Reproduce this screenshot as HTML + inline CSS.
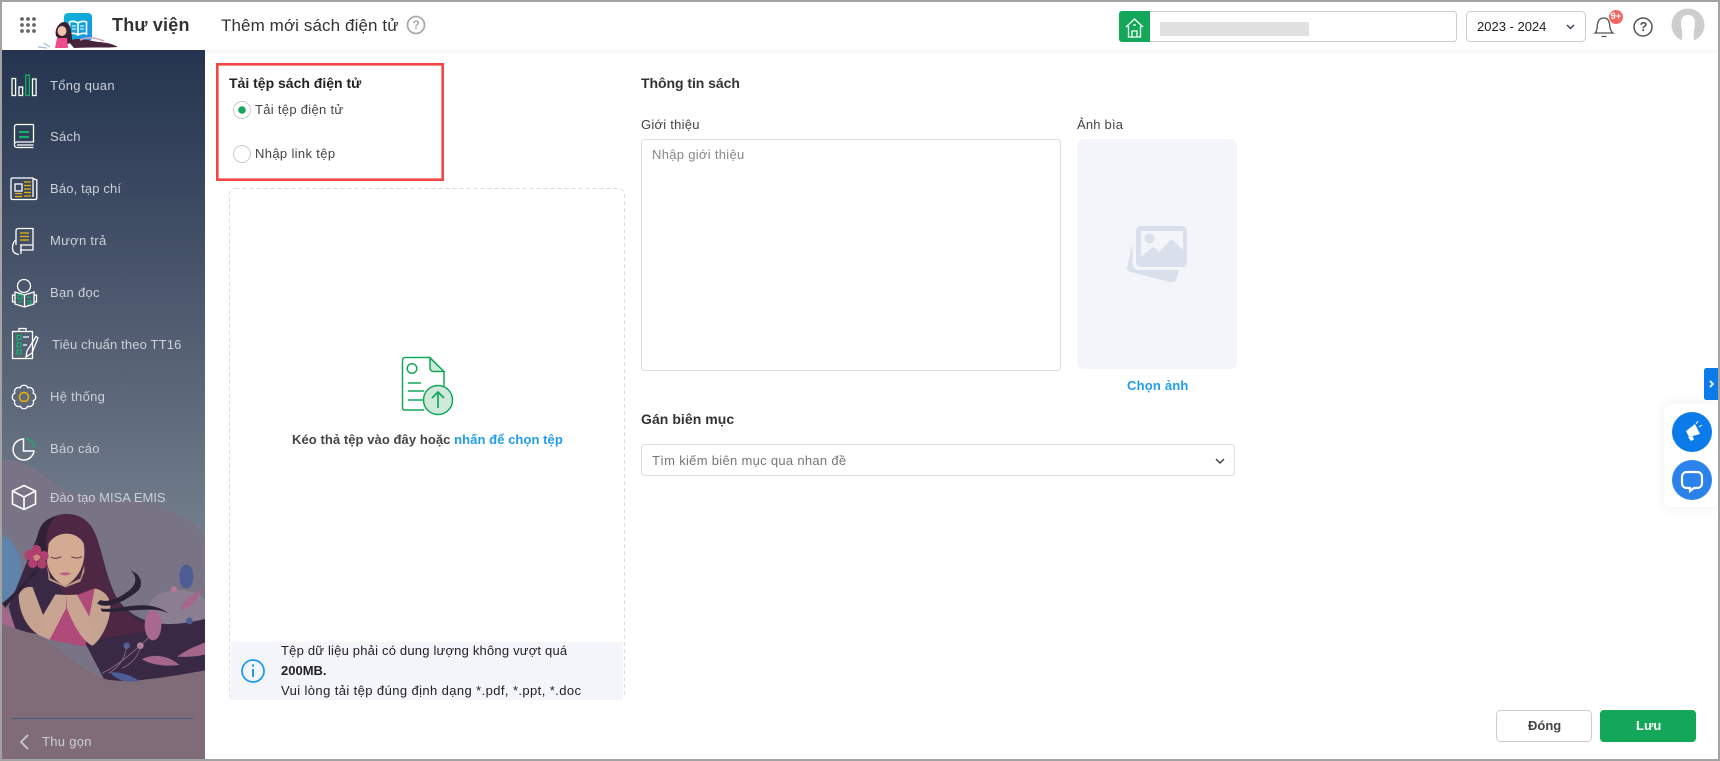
<!DOCTYPE html>
<html lang="vi"><head><meta charset="utf-8"><title>Thêm mới sách điện tử</title>
<style>
html,body{margin:0;padding:0;width:1720px;height:761px;overflow:hidden;background:#fff}
body{position:relative;font-family:"Liberation Sans","DejaVu Sans",sans-serif;font-size:13px;color:#333}
.t{position:absolute;white-space:nowrap;line-height:20px;height:20px}
.s{color:#ccd0d8;letter-spacing:.3px}
.b{position:absolute;box-sizing:border-box}
svg{position:absolute;left:0;top:0;overflow:visible}
</style></head><body>
<div class="b" style="left:0;top:46px;width:1720px;height:8px;background:linear-gradient(#fff 0,#fff 50%,#f3f3f3 50%,#fff)"></div>

<svg width="1720" height="761" viewBox="0 0 1720 761" fill="none">
<defs>
<linearGradient id="sb" x1="0" y1="50" x2="0" y2="560" gradientUnits="userSpaceOnUse"><stop offset="0" stop-color="#25354f"/><stop offset=".3" stop-color="#3c4a62"/><stop offset=".6" stop-color="#566174"/><stop offset="1" stop-color="#778290"/></linearGradient>
<linearGradient id="lg" x1="0" y1="0" x2="1" y2="1"><stop offset="0" stop-color="#0fb4d0"/><stop offset="1" stop-color="#1793e6"/></linearGradient>
<clipPath id="sc"><rect x="2" y="50" width="203" height="709"/></clipPath>
</defs>
<g clip-path="url(#sc)">
<rect x="2" y="50" width="203" height="709" fill="url(#sb)"/>
<g transform="translate(2,500) scale(.33333)">
<path d="M0 -120C60 -125 110 -90 170 -40C260 10 400 -10 480 20C560 50 600 90 615 130V700H0Z" fill="#787385"/>
<path d="M0 105C30 115 60 160 58 220C55 260 30 290 0 310Z" fill="#5f84ac"/>
<ellipse cx="530" cy="325" rx="90" ry="55" fill="#8b7e92"/>
<path d="M120 75C160 30 235 30 268 80C300 130 305 220 345 295C390 360 470 395 615 355V510C540 530 450 545 380 545H310L250 430L40 390L20 320Z" fill="#3a2945"/>
<path d="M120 75C160 30 235 30 268 80C300 130 305 220 345 300C375 350 420 375 470 385L280 420L130 200Z" fill="#4d2743"/>
<path d="M105 130C105 80 130 55 160 50C130 85 130 120 135 160C125 180 110 160 105 130Z" fill="#2f2136"/>
<path d="M0 310C40 280 70 240 105 205L108 215C70 255 40 290 8 325Z" fill="#2f2136"/>
<path d="M50 285C60 262 80 258 92 262L125 350L145 420L110 405C70 380 50 330 50 285Z" fill="#c6a291"/>
<path d="M278 265C300 270 325 285 325 320C325 370 295 420 272 437L240 400Z" fill="#c6a291"/>
<path d="M92 262L160 285L122 350L145 420L250 440L262 350L278 265L225 285L190 290L160 285Z" fill="#b04a79"/>
<path d="M195 285L225 284L262 350L272 437C250 430 220 390 195 325Z" fill="#c9a493"/>
<path d="M160 283L195 285L192 325L145 415C130 400 120 370 122 347Z" fill="#c9a493"/>
<path d="M140 130C165 90 225 92 245 130C252 170 245 225 190 258C160 245 135 215 135 180Z" fill="#d3ab93"/>
<path d="M135 195L145 235L190 258L235 235L247 195L247 215L235 245L190 262L140 240Z" fill="#bd9a86"/>
<path d="M146 172Q162 178 178 170M208 170Q224 178 240 170" stroke="#5a3045" stroke-width="3"/>
<path d="M172 220Q190 214 208 220Q190 232 172 220Z" fill="#c05a88"/>
<g fill="#b03f70"><circle cx="103" cy="150" r="15"/><circle cx="82" cy="165" r="15"/><circle cx="125" cy="168" r="15"/><circle cx="92" cy="190" r="14"/><circle cx="120" cy="192" r="14"/></g><circle cx="104" cy="173" r="10" fill="#c98a7c"/>
<path d="M285 310C320 335 390 290 410 270C425 250 415 220 385 212C405 225 405 250 385 268C360 290 320 310 295 300ZM295 325C350 335 430 290 500 340C450 315 360 340 300 335Z" fill="#2b2335"/>
<ellipse cx="553" cy="230" rx="21" ry="36" fill="#4d5d96"/>
<ellipse cx="453" cy="376" rx="25" ry="45" fill="#a8688f"/>
<circle cx="516" cy="268" r="9" fill="#b57c92"/><circle cx="562" cy="363" r="10" fill="#4d5d96"/><circle cx="374" cy="437" r="10" fill="#4d5d96"/><circle cx="415" cy="437" r="10" fill="#b0829a"/>
<path d="M535 330C540 300 570 285 598 270C590 300 565 325 535 330ZM420 478C450 460 500 465 532 495C490 500 450 495 420 478ZM525 470C560 445 590 435 615 425V462C585 470 550 472 525 470Z" fill="#a5668c"/>
<path d="M300 520C360 490 470 400 530 300M516 268L530 300L553 265M374 437C370 480 345 505 320 520M415 437C410 470 390 490 360 505" stroke="#a07c90" stroke-width="2"/>
<path d="M0 370C40 390 90 395 130 420C190 460 230 500 290 530C340 555 450 540 615 510V800H0Z" fill="#806c78"/>
<path d="M325 517C360 515 395 530 412 543C385 548 345 545 325 517Z" fill="#4d5d96"/>
<path d="M0 310C15 330 30 350 40 385L0 370Z" fill="#a5668c"/>
</g>
<rect x="12" y="718" width="181" height="1" fill="#4a5f80"/>
<path d="M28 735L21 742L28 749" stroke="#c8ccd2" stroke-width="1.8"/>
<!-- menu icons -->
<g stroke="#fff" stroke-width="1.3">
<rect x="12" y="78.500" width="3.600" height="17"/><rect x="19" y="87" width="3.600" height="8.500"/><rect x="25.700" y="75" width="3.600" height="20.500" stroke="#14b168"/><rect x="32.500" y="79" width="3.600" height="16.500"/>
<path d="M33.500 124.500H17C15.300 124.500 14.500 125.500 14.500 127V145C14.500 146.500 15.500 147.500 17 147.500H33.500M33.500 124.500V142H17C15.500 142 14.500 143 14.500 144.500M17 145H33.500"/>
<path d="M19 132H29M19 137H29" stroke="#14b168" stroke-width="2"/>
<path d="M33 178H12.500C11.500 178 11 178.500 11 179.500V198C11 199 11.500 199.500 12.500 199.500H35C36 199.500 36.800 199 36.800 198V180L33 178.500V197"/>
<rect x="15" y="184" width="7" height="7"/>
<path d="M24 182H31M24 185.500H31M24 189H31M24 192.500H31M24 196H31M15 193.500H22M15 196.500H22" stroke="#eab308" stroke-width="1.300"/>
<path d="M16 245V231C16 229 17 228.500 18.500 228.500H33V250H20M20 245H33M16 240C13 242 12.500 245 12.500 248C12.500 252 15 254 19 254.500M21 245V254"/>
<path d="M20 233H29M20 236.500H29M20 240H29" stroke="#eab308"/>
<circle cx="24" cy="286" r="6.500"/>
<path d="M15 292L24.500 295L34 292V304L24.500 307L15 304ZM24.500 295V307M15 295H12.500V302H15M34 295H36.500V302H34"/>
<path d="M18 295H22V299H18ZM27 301H31V304H27M27 297H31M18 302H22" stroke="#14b168"/>
<rect x="12.500" y="331.500" width="20" height="27"/>
<path d="M19 331.500V328.500H26V331.500M32 353L38 338L36 336.500L27 351L26 357Z"/>
<path d="M17 335.500H21V339.500H17ZM17 343H21V347H17ZM17 350H21V354H17Z" stroke="#14b168"/>
<path d="M23 337H29M23 345H27"/>
<path d="M33.240 393.170A4.200 4.200 0 0 1 33.240 400.830A4.200 4.200 0 0 1 27.830 406.240A4.200 4.200 0 0 1 20.170 406.240A4.200 4.200 0 0 1 14.760 400.830A4.200 4.200 0 0 1 14.760 393.170A4.200 4.200 0 0 1 20.170 387.760A4.200 4.200 0 0 1 27.830 387.760A4.200 4.200 0 0 1 33.240 393.170Z"/>
<circle cx="24" cy="397" r="4.500" stroke="#eab308" stroke-width="1.500"/>
<path d="M23.500 439A10.500 10.500 0 1 0 34 451H23.500Z" stroke-width="1.500"/>
<path d="M26.500 438.500A10 10 0 0 1 34.500 447.500" stroke="#14b168" stroke-width="1.500"/>
<path d="M24 485.500L35.500 491V504L24 509.500L12.500 504V491ZM12.500 491L24 497L35.500 491M24 497V509.500" stroke-width="1.600"/>
</g>
</g>
<!-- header -->
<g fill="#666"><circle cx="22" cy="19" r="1.900"/><circle cx="28" cy="19" r="1.900"/><circle cx="34" cy="19" r="1.900"/><circle cx="22" cy="25" r="1.900"/><circle cx="28" cy="25" r="1.900"/><circle cx="34" cy="25" r="1.900"/><circle cx="22" cy="31" r="1.900"/><circle cx="28" cy="31" r="1.900"/><circle cx="34" cy="31" r="1.900"/></g>
<rect x="64" y="13" width="28" height="28" rx="4" fill="url(#lg)"/>
<path d="M78 23C75 21 72 21 69.500 22V34C72 33 75 33 78 35C81 33 84 33 86.500 34V22C84 21 81 21 78 23ZM78 23V35" stroke="#fff" stroke-width="1.600"/>
<path d="M72 26H76M72 29H76M80 26H84M80 29H84" stroke="#fff"/>
<path d="M68 41C80 36 92 42 100 42C108 43 113 44 118 47C108 48 92 47 74 48Z" fill="#46243c"/>
<path d="M80 40C88 36 96 38 104 41" stroke="#d9a0c0" stroke-width="1.600"/>
<path d="M56 36C54 28 60 22 64 22C70 22 72 30 72 42L68 44L60 40Z" fill="#3b1f33"/>
<ellipse cx="62" cy="31" rx="4.500" ry="5" fill="#f0c3ae"/>
<path d="M55 48L57 38H67L68 48Z" fill="#ee4d8d"/>
<path d="M38 47L47 48M44 43L50 47" stroke="#a9b8e0" stroke-width="1.300"/>
<circle cx="416" cy="25" r="8.500" stroke="#aaa" stroke-width="1.800"/>
<rect x="1119.500" y="11.500" width="337" height="30" rx="3" stroke="#ccc" fill="#fff"/>
<path d="M1119 14a3 3 0 0 1 3-3h28v31h-28a3 3 0 0 1-3-3z" fill="#12a759"/>
<path d="M1126 27L1134.500 19L1143 27M1128.500 26V37H1140.500V26M1132 37V31H1137V37M1133 25H1136" stroke="#fff" stroke-width="1.300"/>
<rect x="1160" y="22" width="149" height="14" fill="#e1e1e1"/>
<rect x="1466.500" y="11.500" width="119" height="30" rx="4" stroke="#ccc" fill="#fff"/>
<path d="M1567 25L1570.500 28.500L1574 25" stroke="#445" stroke-width="1.500"/>
<path d="M1595 33C1597.500 31 1597 27 1597.500 24C1598 20 1600 18 1604 18C1607 18 1609 20 1609.500 24C1610 27 1610 31 1613 33ZM1601.500 36.500H1606.500" stroke="#555" stroke-width="1.300"/>
<circle cx="1616" cy="17" r="7" fill="#f56565"/>
<circle cx="1643" cy="27" r="9" stroke="#555" stroke-width="1.500"/>
<circle cx="1688" cy="25" r="16.500" fill="#cdcdcd"/>
<path d="M1681 42C1684 34 1681 29 1681 23C1681 17 1684 15 1688 15C1692 15 1695 17 1695 23C1695 29 1692 34 1695 42Z" fill="#fff"/>
<!-- red box -->
<rect x="217.300" y="64.300" width="225.400" height="115.400" stroke="#f44545" stroke-width="2.600"/>
<circle cx="242" cy="110" r="8.500" stroke="#ccc" fill="#fff"/><circle cx="242" cy="110" r="3.800" fill="#12a759"/>
<circle cx="242" cy="154" r="8.500" stroke="#ccc" fill="#fff"/>
<!-- dropzone -->
<rect x="229.500" y="188.500" width="395" height="511" rx="6" stroke="#ddd" stroke-dasharray="4 3"/>
<rect x="231" y="642" width="392" height="58" fill="#f4f5fa"/>
<circle cx="253" cy="671" r="11" stroke="#1f9cee" stroke-width="1.800"/>
<path d="M253 669V677" stroke="#1f9cee" stroke-width="2"/><circle cx="253" cy="665.500" r="1.200" fill="#1f9cee"/>
<g stroke="#12a759" stroke-width="1.500">
<path d="M430 357.500H405C403.500 357.500 402.500 358.500 402.500 360V408C402.500 409.500 403.500 410 405 410H424M430 357.500L444 372V386"/>
<path d="M430 358V368C430 370.500 431.500 371.500 434 371.500H444Z" fill="#cfe9da"/>
<circle cx="412" cy="368.500" r="4.800"/>
<path d="M408 383H421M408 391H424M408 400H424"/>
<circle cx="438" cy="400" r="14.500" fill="#cfe9da"/>
<path d="M438 408V392.500M432 398L438 392L444 398" stroke-width="1.700"/>
</g>
<!-- right column -->
<rect x="641.500" y="139.500" width="419" height="231" rx="3" stroke="#ddd" fill="#fff"/>
<rect x="1077" y="139" width="160" height="230" rx="7" fill="#f4f5fa"/>
<path d="M1132.500 243L1127 268C1126.500 270 1127.500 271 1129 271.500L1170 282C1174 283 1176 281 1177 278L1179 270H1140C1135 270 1132.500 268 1132.500 262Z" fill="#d9e0ec"/>
<path d="M1141 226H1182C1185 226 1187 228 1187 231V262C1187 265 1185 267 1182 267H1141C1138 267 1136 265 1136 262V231C1136 228 1138 226 1141 226Z" fill="#d9e0ec"/>
<path d="M1141 231H1183V250L1174 241C1172.500 239.500 1171 239.500 1169.500 241L1159 252L1155 248C1154 247 1152.500 247 1151.500 248L1141 257Z" fill="#f4f5fa"/>
<circle cx="1149.500" cy="238.500" r="5" fill="#d9e0ec"/>
<rect x="641.500" y="444.500" width="593" height="31" rx="3" stroke="#ddd" fill="#fff"/>
<path d="M1216 459L1220 463L1224 459" stroke="#444" stroke-width="1.500"/>
<!-- side widgets -->
<rect x="1664" y="404" width="54" height="103" rx="6" fill="#fff" style="filter:drop-shadow(0 0 6px #eee)"/>
<path d="M1718 368H1707C1705 368 1704 369 1704 371V397C1704 399 1705 400 1707 400H1718Z" fill="#0a7be8"/>
<path d="M1710 381L1713 384L1710 387" stroke="#fff" stroke-width="1.800"/>
<circle cx="1692" cy="432" r="20" fill="#0a7be8"/>
<path d="M1686 431L1695 424L1700 434L1689 437ZM1688 437L1691 441L1694 439.500L1692.500 436Z" fill="#fff"/>
<path d="M1696 424L1698 421M1699 427L1702 425" stroke="#fff"/>
<circle cx="1692" cy="480" r="20" fill="#2b82ea"/>
<path d="M1687 472H1697C1700 472 1702 474 1702 477V483C1702 486 1700 488 1697 488H1694L1690 491V488H1687C1684 488 1682 486 1682 483V477C1682 474 1684 472 1687 472Z" stroke="#fff" stroke-width="2.200"/>
<!-- buttons -->
<rect x="1496.500" y="710.500" width="95" height="31" rx="4" stroke="#ccc" fill="#fff"/>
<rect x="1600" y="710" width="96" height="32" rx="4" fill="#12a759"/>
</svg>

<!-- sidebar text -->
<span class="t s" style="left:50px;top:76px">Tổng quan</span>
<span class="t s" style="left:50px;top:127px">Sách</span>
<span class="t s" style="left:50px;top:179px;letter-spacing:.15px">Báo, tạp chí</span>
<span class="t s" style="left:50px;top:231px">Mượn trả</span>
<span class="t s" style="left:50px;top:283px">Bạn đọc</span>
<span class="t s" style="left:52px;top:335px;letter-spacing:.15px">Tiêu chuẩn theo TT16</span>
<span class="t s" style="left:50px;top:387px">Hệ thống</span>
<span class="t s" style="left:50px;top:439px">Báo cáo</span>
<span class="t s" style="left:50px;top:488px;letter-spacing:0">Đào tạo MISA EMIS</span>
<span class="t s" style="left:42px;top:732px">Thu gọn</span>

<!-- header text -->
<span class="t" style="left:112px;top:15px;font-size:18px;font-weight:700;color:#333;letter-spacing:.2px">Thư viện</span>
<span class="t" style="left:221px;top:16px;font-size:17px;color:#333;letter-spacing:.1px">Thêm mới sách điện tử</span>
<span class="t" style="left:412.500px;top:15px;font-size:12px;font-weight:700;color:#aaa">?</span>
<span class="t" style="left:1477px;top:17px;font-size:13px;color:#222;letter-spacing:0">2023 - 2024</span>
<span class="t" style="left:1610.500px;top:7px;font-size:9.500px;font-weight:700;color:#fff">9+</span>
<span class="t" style="left:1639.500px;top:17px;font-size:13px;font-weight:700;color:#555">?</span>

<!-- left column -->
<span class="t" style="left:229px;top:73px;font-size:14px;font-weight:700;color:#222">Tải tệp sách điện tử</span>
<span class="t" style="left:255px;top:100px;letter-spacing:.3px;color:#444">Tải tệp điện tử</span>
<span class="t" style="left:255px;top:144px;letter-spacing:.35px;color:#444">Nhập link tệp</span>
<span class="t" style="left:292px;top:430px;font-weight:700;color:#444;letter-spacing:.07px">Kéo thả tệp vào đây hoặc <span style="color:#1f9cee">nhấn để chọn tệp</span></span>
<span class="t" style="left:281px;top:641px;color:#222;letter-spacing:.2px;font-size:13px">Tệp dữ liệu phải có dung lượng không vượt quá</span>
<span class="t" style="left:281px;top:661px;color:#222;font-weight:700">200MB.</span>
<span class="t" style="left:281px;top:681px;color:#222;letter-spacing:.4px;font-size:13px">Vui lòng tải tệp đúng định dạng *.pdf, *.ppt, *.doc</span>

<!-- right column -->
<span class="t" style="left:641px;top:73px;font-size:14px;font-weight:700;color:#333;letter-spacing:-.05px">Thông tin sách</span>
<span class="t" style="left:641px;top:115px;color:#444;letter-spacing:.25px">Giới thiệu</span>
<span class="t" style="left:1077px;top:115px;color:#444;letter-spacing:.2px">Ảnh bìa</span>
<span class="t" style="left:652px;top:145px;color:#888;letter-spacing:.3px">Nhập giới thiệu</span>
<span class="t" style="left:1127px;top:376px;font-weight:700;color:#1f9cee;letter-spacing:.2px">Chọn ảnh</span>
<span class="t" style="left:641px;top:409px;font-size:14px;font-weight:700;color:#333;letter-spacing:.05px">Gán biên mục</span>
<span class="t" style="left:652px;top:451px;color:#777;letter-spacing:.3px">Tìm kiếm biên mục qua nhan đề</span>
<span class="t" style="left:1528px;top:716px;font-weight:700;color:#444">Đóng</span>
<span class="t" style="left:1636px;top:716px;font-weight:700;color:#fff">Lưu</span>

<!-- window frame -->
<div class="b" style="left:0;top:0;width:1720px;height:761px;border:2px solid #a3a3a3;pointer-events:none"></div>
</body></html>
